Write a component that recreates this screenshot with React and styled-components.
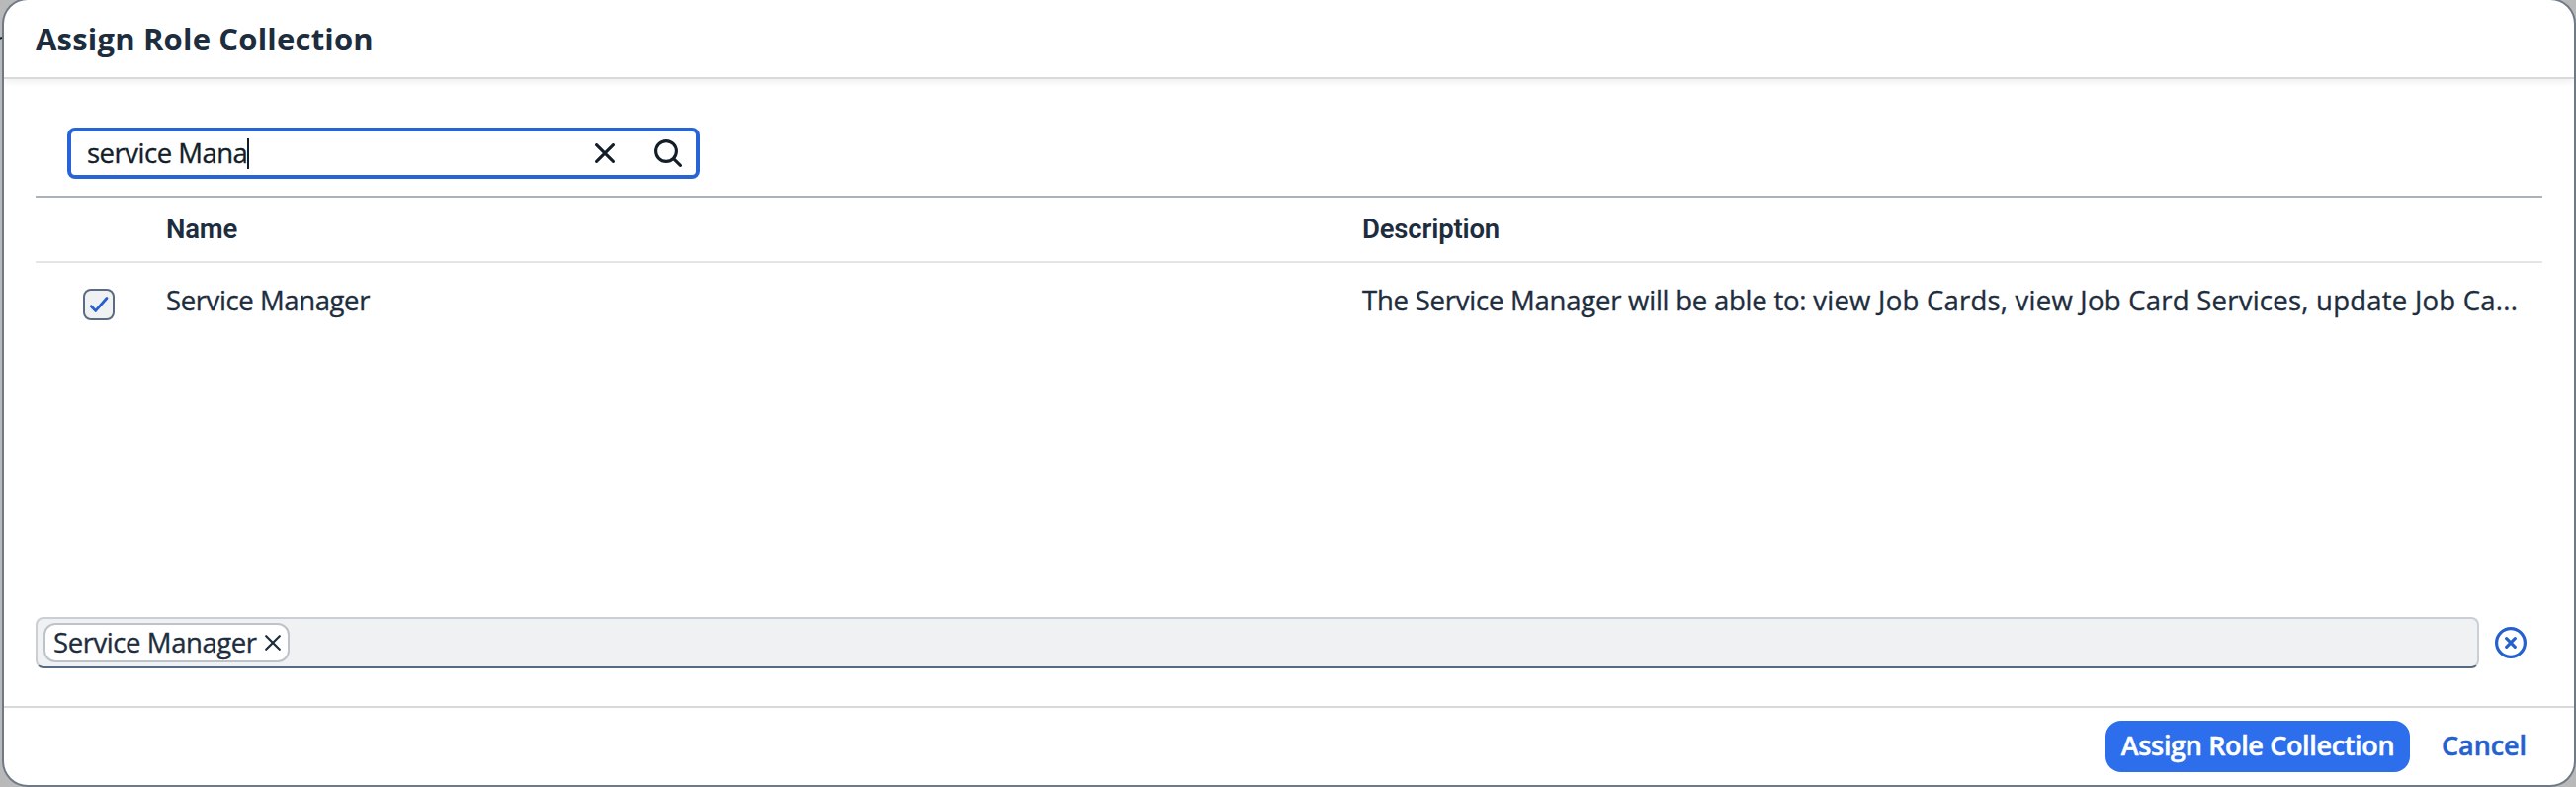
import React from "react";
import styled, { createGlobalStyle } from "styled-components";

const Global = createGlobalStyle`
  * { box-sizing: border-box; }
  body { margin: 0; background: #b9b9b9; font-family: "Open Sans", "Noto Sans", sans-serif; color: #1d2d3e; }
`;

const Page = styled.div`
  position: relative;
  width: 2606px;
  height: 796px;
  padding: 0 2px 2px 4px;
  overflow: hidden;
`;

const BehindText = styled.span`
  position: absolute;
  left: -7px;
  top: 22px;
  font-size: 28px;
  line-height: 38px;
  color: #16202b;
`;

const Dialog = styled.div`
  position: relative;
  height: 794px;
  border-radius: 24px;
  background: #fff;
  box-shadow: 0 0 0 2px #6f7a86;
  display: flex;
  flex-direction: column;
  overflow: hidden;
  -webkit-text-stroke-width: 0.35px;
`;

const Header = styled.header`
  height: 80px;
  flex: none;
  padding: 0 32px;
  border-bottom: 2px solid #d9d9d9;
  box-shadow: 0 2px 8px rgba(0, 0, 0, 0.08);
`;

const Title = styled.h1`
  margin: 0;
  font-size: 31px;
  font-weight: 700;
  line-height: 79px;
  letter-spacing: 0.19px;
  -webkit-text-stroke-width: 0;
`;

const Body = styled.main`
  flex: 1;
  display: flex;
  flex-direction: column;
  padding: 49px 32px 38px;
`;

const SearchField = styled.div`
  width: 640px;
  height: 52px;
  margin: 0 0 17px 32px;
  padding: 0 14px 0 16px;
  border: 4px solid #2864d6;
  border-radius: 8px;
  display: flex;
  align-items: center;
  color: #131e29;
`;

const Query = styled.span`
  font-size: 27.5px;
  line-height: 44px;
  letter-spacing: -0.5px;
  white-space: pre;
`;

const Caret = styled.span`
  width: 2px;
  height: 31px;
  background: #131e29;
`;

const FieldIcons = styled.div`
  margin-left: auto;
  display: flex;
  align-items: center;
  gap: 40px;
`;

const Table = styled.div`
  flex: 1;
  border-top: 2px solid #a8b3bd;
`;

const Row = styled.div`
  display: grid;
  grid-template-columns: 132px 1210px 1fr;
  align-items: start;
`;

const HeadRow = styled(Row)`
  height: 66px;
  border-bottom: 2px solid #e5e5e5;
`;

const HeadCell = styled.div`
  font-family: Roboto, "Open Sans", sans-serif;
  font-size: 27.5px;
  font-weight: 600;
  line-height: 63px;
  letter-spacing: -0.18px;
  -webkit-text-stroke-width: 0;
`;

const Cell = styled.div`
  font-size: 27.5px;
  line-height: 76px;
  letter-spacing: ${(p) => p.$spacing}px;
  white-space: nowrap;
`;

const Lead = styled.span`
  letter-spacing: -0.23px;
`;

const Checkbox = styled.div`
  width: 32px;
  height: 32px;
  margin: 26px 0 0 48px;
  border: 2px solid #5b6b80;
  border-radius: 8px;
  background: #eff1f2;
  display: flex;
`;

const Selection = styled.div`
  display: flex;
  align-items: center;
  gap: 16px;
`;

const TokenField = styled.div`
  width: 2472px;
  height: 52px;
  padding: 4px 6px;
  border: 2px solid #c9cfd5;
  border-bottom-color: #556b82;
  border-radius: 8px;
  background: #eff1f2;
`;

const Token = styled.div`
  width: 249px;
  height: 40px;
  padding-left: 8px;
  border: 2px solid #bcc3ca;
  border-radius: 12px;
  background: #fff;
  display: flex;
  align-items: center;
  gap: 8px;
  font-size: 27.5px;
  line-height: 36px;
  letter-spacing: -0.42px;
  white-space: nowrap;
`;

const Footer = styled.footer`
  height: 80px;
  flex: none;
  border-top: 2px solid #d9d9d9;
  padding: 13px 32px 0;
  display: flex;
  justify-content: flex-end;
  gap: 16px;
`;

const Button = styled.button`
  height: 52px;
  width: ${(p) => p.$width}px;
  padding: 0 0 2px;
  border: 0;
  border-radius: 16px;
  background: ${(p) => (p.$primary ? "#2c6eeb" : "transparent")};
  color: ${(p) => (p.$primary ? "#fff" : "#2560cf")};
  font: 600 27px "Open Sans", sans-serif;
  line-height: 50px;
  letter-spacing: ${(p) => p.$spacing}px;
  white-space: nowrap;
  -webkit-text-stroke-width: 0.5px;
`;

const Icon = styled.svg`
  display: block;
  flex: none;
  fill: none;
  stroke: currentColor;
  stroke-linecap: round;
  stroke-linejoin: round;
`;

const AccentIcon = styled(Icon)`
  color: #2560cf;
`;

export default function App() {
  return (
    <>
      <Global />
      <Page>
        <BehindText>r</BehindText>
        <Dialog>
          <Header>
            <Title>Assign Role Collection</Title>
          </Header>
          <Body>
            <SearchField>
              <Query>service Mana</Query>
              <Caret />
              <FieldIcons>
                <Icon width="20" height="20" strokeWidth="3.1">
                  <path d="M1.6 1.6 18.4 18.4M18.4 1.6 1.6 18.4" />
                </Icon>
                <Icon width="28" height="28" strokeWidth="3.1">
                  <circle cx="12" cy="12" r="10.4" />
                  <path d="m19.8 19.8 6.6 6.6" />
                </Icon>
              </FieldIcons>
            </SearchField>
            <Table>
              <HeadRow>
                <span />
                <HeadCell>Name</HeadCell>
                <HeadCell>Description</HeadCell>
              </HeadRow>
              <Row>
                <Checkbox>
                  <AccentIcon width="28" height="28" strokeWidth="2.8">
                    <path d="m6.3 15.8 4.4 4.6L22 7.5" />
                  </AccentIcon>
                </Checkbox>
                <Cell $spacing={-0.4}>Service Manager</Cell>
                <Cell $spacing={0.24}>
                  <Lead>The Service Manager will be able to: </Lead>
                  view Job Cards, view Job Card Services, update Job Ca...
                </Cell>
              </Row>
            </Table>
            <Selection>
              <TokenField>
                <Token>
                  Service Manager
                  <Icon width="16" height="16" strokeWidth="2.2">
                    <path d="m1.2 1.2 13.6 13.6M14.8 1.2 1.2 14.8" />
                  </Icon>
                </Token>
              </TokenField>
              <AccentIcon width="32" height="32" strokeWidth="3.2">
                <circle cx="16" cy="16" r="14.4" />
                <path d="m11.7 11.7 8.6 8.6M20.3 11.7l-8.6 8.6" />
              </AccentIcon>
            </Selection>
          </Body>
          <Footer>
            <Button $primary $width={308} $spacing={-0.35}>Assign Role Collection</Button>
            <Button $width={118} $spacing={-0.1}>Cancel</Button>
          </Footer>
        </Dialog>
      </Page>
    </>
  );
}
